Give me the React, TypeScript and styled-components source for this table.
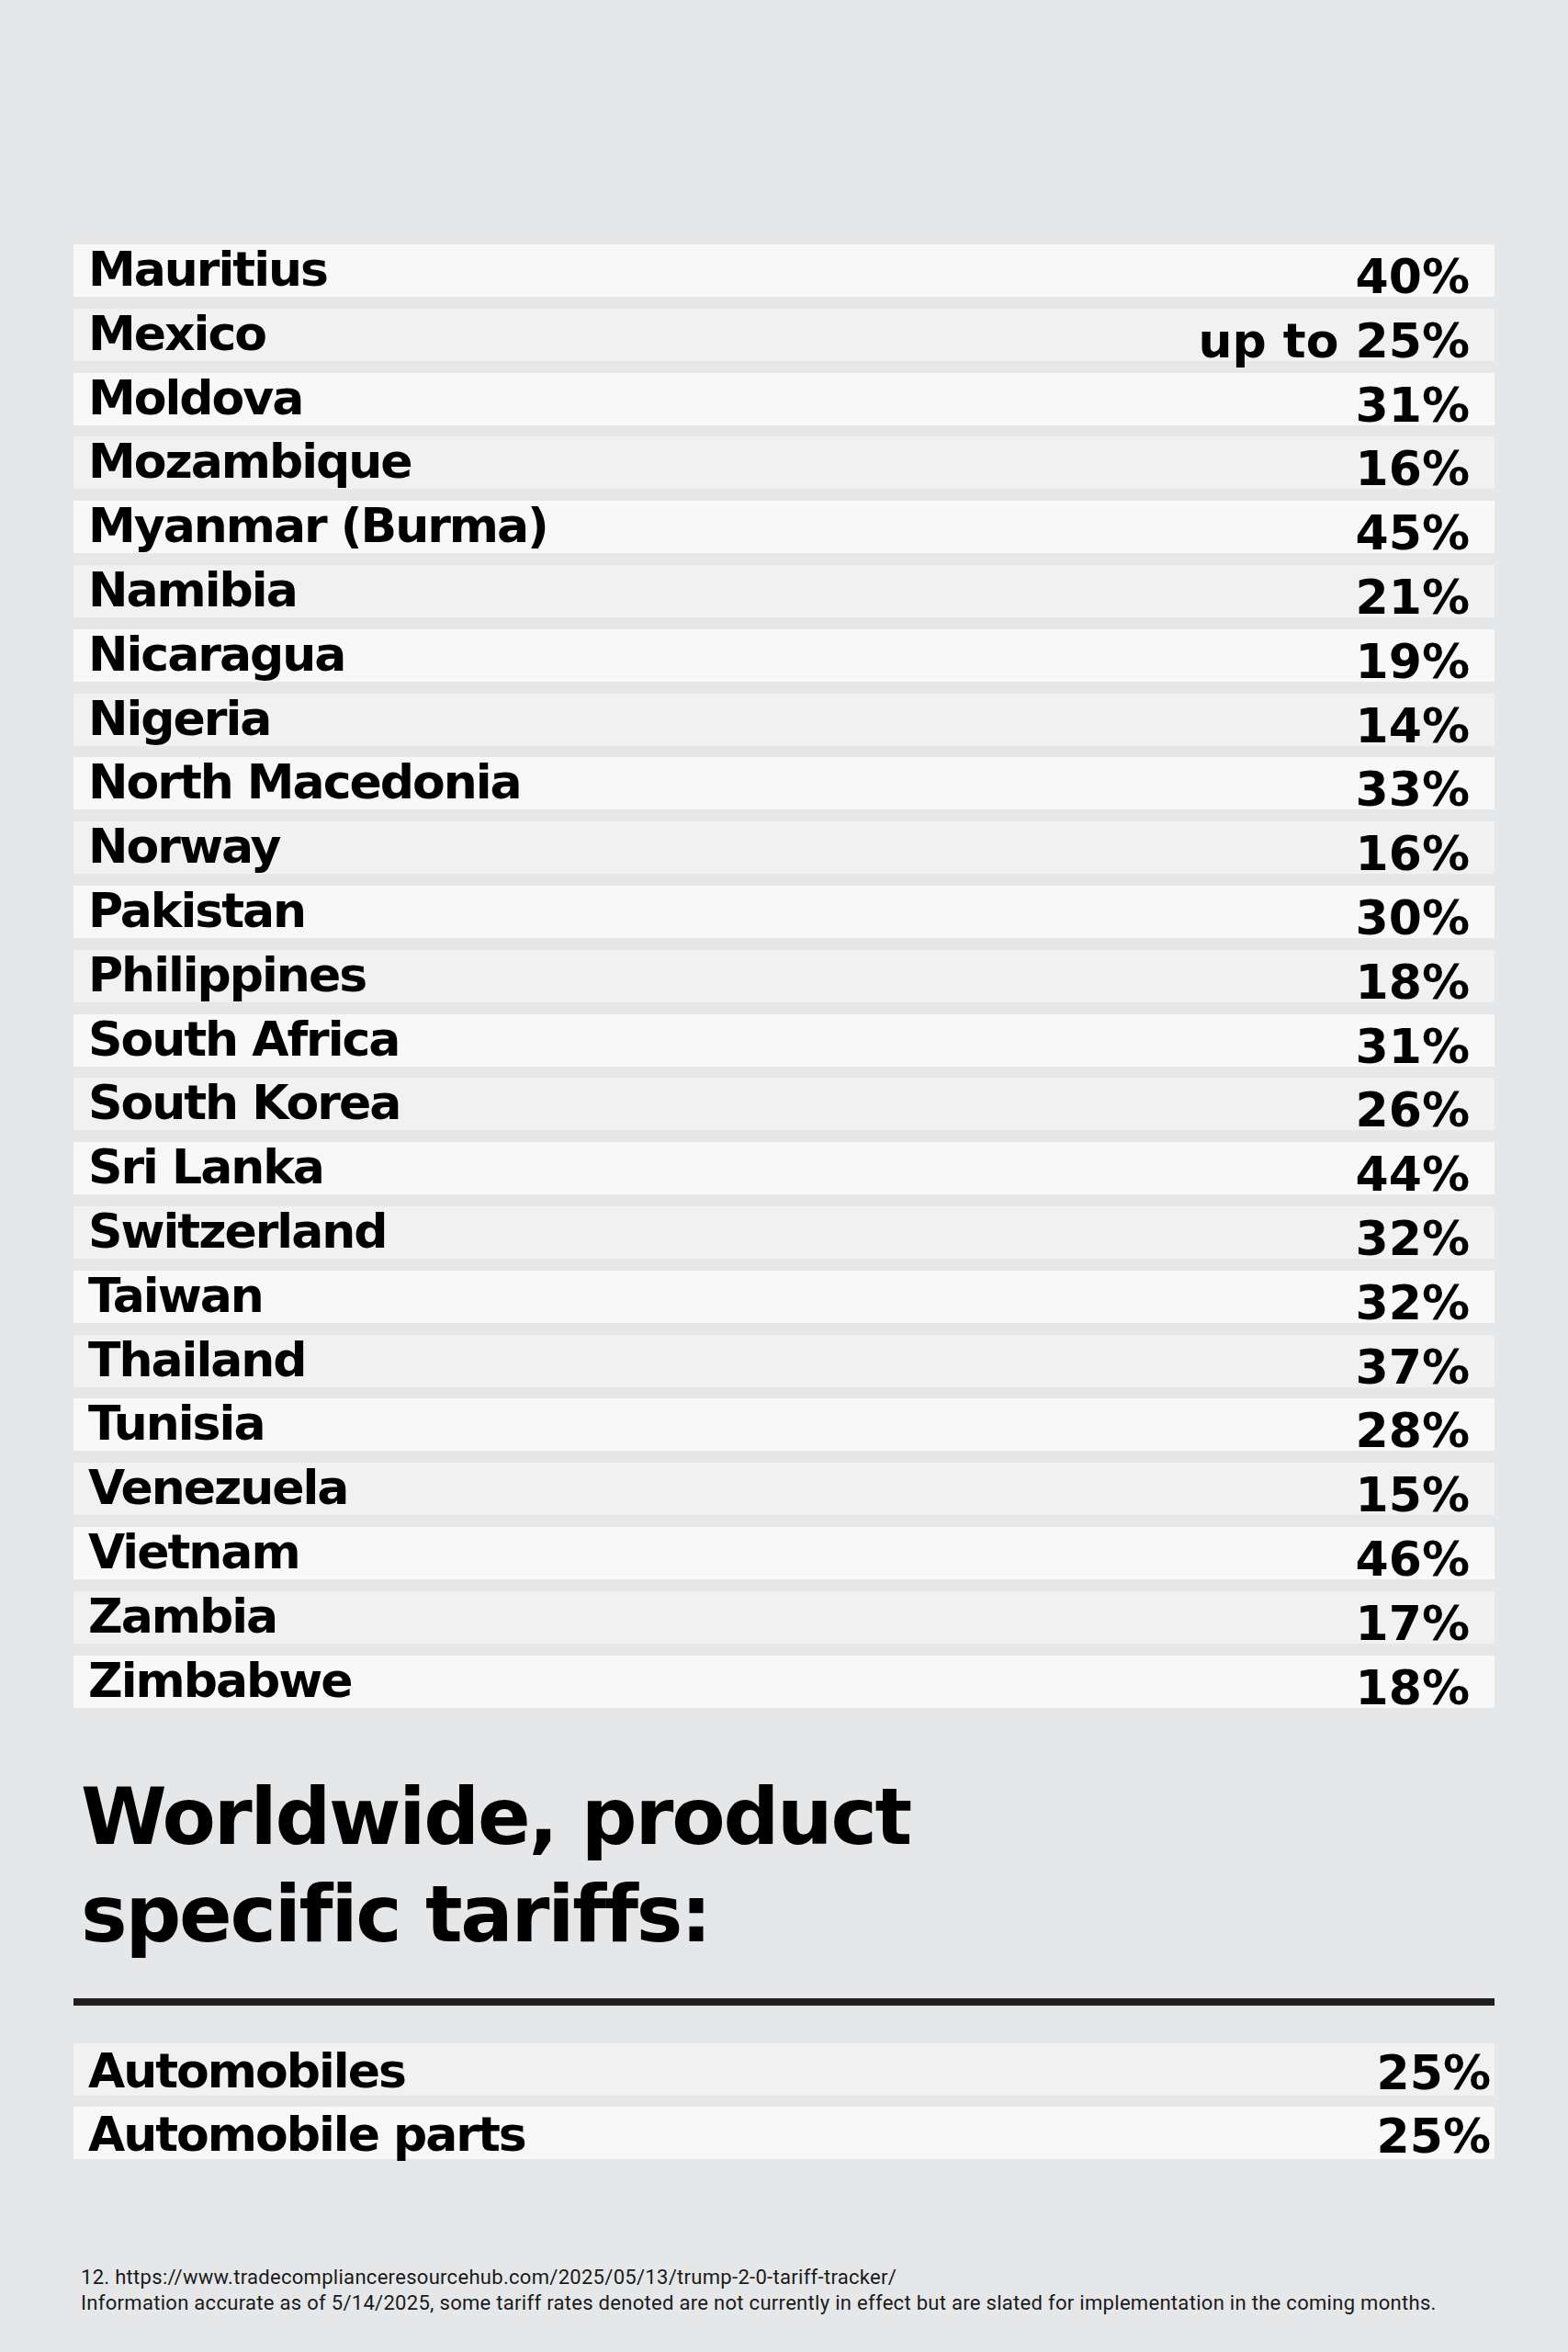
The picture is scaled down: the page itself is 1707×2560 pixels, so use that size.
import React from "react";
import styled, { createGlobalStyle } from "styled-components";

const countries: [string, string][] = [
  ["Mauritius", "40%"],
  ["Mexico", "up to 25%"],
  ["Moldova", "31%"],
  ["Mozambique", "16%"],
  ["Myanmar (Burma)", "45%"],
  ["Namibia", "21%"],
  ["Nicaragua", "19%"],
  ["Nigeria", "14%"],
  ["North Macedonia", "33%"],
  ["Norway", "16%"],
  ["Pakistan", "30%"],
  ["Philippines", "18%"],
  ["South Africa", "31%"],
  ["South Korea", "26%"],
  ["Sri Lanka", "44%"],
  ["Switzerland", "32%"],
  ["Taiwan", "32%"],
  ["Thailand", "37%"],
  ["Tunisia", "28%"],
  ["Venezuela", "15%"],
  ["Vietnam", "46%"],
  ["Zambia", "17%"],
  ["Zimbabwe", "18%"],
];

const products: [string, string][] = [
  ["Automobiles", "25%"],
  ["Automobile parts", "25%"],
];

const GlobalStyle = createGlobalStyle`
  html, body {
    margin: 0;
    padding: 0;
    background: #e6e7e9;
  }
`;

const App = () => {
  return (
    <>
      <GlobalStyle />
      <Page>
        <Table>
          {countries.map(([name, rate], i) => (
            <Row key={name} $light={i % 2 === 0}>
              <Name>{name}</Name>
              <Rate>{rate}</Rate>
            </Row>
          ))}
        </Table>

        <Heading>
          Worldwide, product
          <br />
          specific tariffs:
        </Heading>

        <Divider />

        <Table>
          {products.map(([name, rate], i) => (
            <Row key={name} $light={i % 2 === 1}>
              <Name $drop>{name}</Name>
              <Rate $tight>{rate}</Rate>
            </Row>
          ))}
        </Table>

        <Footnote>
          12. https://www.tradecomplianceresourcehub.com/2025/05/13/trump-2-0-tariff-tracker/
          <br />
          Information accurate as of 5/14/2025, some tariff rates denoted are not currently in
          effect but are slated for implementation in the coming months.
        </Footnote>
      </Page>
    </>
  );
};

const Page = styled.div`
  width: 1707px;
  min-height: 2560px;
  box-sizing: border-box;
  padding: 266px 80px 0 80px;
  background: #e6e7e9;
  display: flex;
  flex-direction: column;
`;

const Table = styled.div`
  display: flex;
  flex-direction: column;
  gap: 12.8px;
`;

const Row = styled.div<{ $light: boolean }>`
  height: 57px;
  display: flex;
  justify-content: space-between;
  align-items: flex-start;
  background: ${(p) => (p.$light ? "#f8f8f8" : "#f1f1f1")};
  font-family: "DejaVu Sans", "Liberation Sans", sans-serif;
  font-weight: 700;
  font-size: 52px;
  color: #000;
`;

const Name = styled.span<{ $drop?: boolean }>`
  line-height: 57px;
  padding-left: 16px;
  margin-top: ${(p) => (p.$drop ? "2px" : "-1px")};
  letter-spacing: -2px;
  white-space: nowrap;
`;

const Rate = styled.span<{ $tight?: boolean }>`
  line-height: 57px;
  padding-right: ${(p) => (p.$tight ? "4px" : "27px")};
  margin-top: ${(p) => (p.$tight ? "4px" : "7px")};
  white-space: nowrap;
`;

const Heading = styled.h2`
  margin: 66px 0 0 8px;
  font-family: "DejaVu Sans", "Liberation Sans", sans-serif;
  font-weight: 700;
  font-size: 85px;
  line-height: 106px;
  letter-spacing: -2.2px;
  color: #000;
`;

const Divider = styled.hr`
  margin: 38px 0 41px 0;
  border: none;
  height: 8px;
  background: #231f20;
`;

const Footnote = styled.p`
  margin: 115px 0 0 8px;
  font-family: Roboto, "Liberation Sans", sans-serif;
  font-size: 22px;
  line-height: 28px;
  letter-spacing: 0.3px;
  color: #1a1a1a;
`;

export default App;
